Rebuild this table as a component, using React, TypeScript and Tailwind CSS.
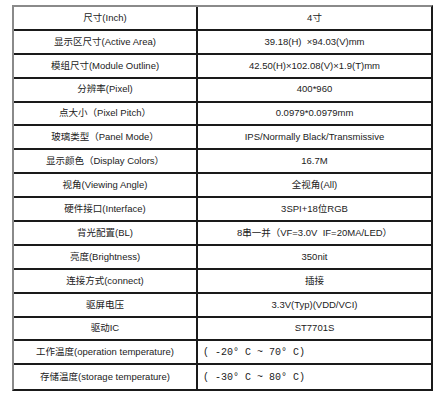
const rows: { label: string; value: string; mono?: boolean }[] = [
  { label: "尺寸(Inch)", value: "4寸" },
  { label: "显示区尺寸(Active Area)", value: "39.18(H)  ×94.03(V)mm" },
  { label: "模组尺寸(Module Outline)", value: "42.50(H)×102.08(V)×1.9(T)mm" },
  { label: "分辨率(Pixel)", value: "400*960" },
  { label: "点大小（Pixel Pitch）", value: "0.0979*0.0979mm" },
  { label: "玻璃类型（Panel Mode）", value: "IPS/Normally Black/Transmissive" },
  { label: "显示颜色（Display Colors）", value: "16.7M" },
  { label: "视角(Viewing Angle)", value: "全视角(All)" },
  { label: "硬件接口(Interface)", value: "3SPI+18位RGB" },
  { label: "背光配置(BL)", value: "8串一并（VF=3.0V  IF=20MA/LED）" },
  { label: "亮度(Brightness)", value: "350nit" },
  { label: "连接方式(connect)", value: "插接" },
  { label: "驱屏电压", value: "3.3V(Typ)(VDD/VCI)" },
  { label: "驱动IC", value: "ST7701S" },
  { label: "工作温度(operation temperature)", value: "( -20° C ~ 70° C)", mono: true },
  { label: "存储温度(storage temperature)", value: "( -30° C ~ 80° C)", mono: true },
];

export default function App() {
  return (
    <div className="min-h-screen w-[447px] h-[400px] bg-white pl-[12px] pt-[5px] text-[#222] font-['Liberation_Sans','Noto_Sans_CJK_SC',sans-serif] text-[9.5px]">
      <div className="w-[421px] border-2 border-[#1a1a1a] border-t-[#8a8a8a] border-l-[#8a8a8a]">
        {rows.map((r, i) => (
          <div
            key={r.label}
            className={
              "flex h-[23.9px] items-center " +
              (i < rows.length - 1 ? "border-b-2 border-[#1a1a1a]" : "")
            }
          >
            <div className="w-[184px] h-full border-r-2 border-[#1a1a1a] flex items-center justify-center whitespace-pre">
              {r.label}
            </div>
            {r.mono ? (
              <div className="flex-1 h-full flex items-center pl-[5px] whitespace-pre font-['Liberation_Mono','Noto_Sans_CJK_SC',monospace] text-[10px]">
                {r.value}
              </div>
            ) : (
              <div className="flex-1 h-full flex items-center justify-center whitespace-pre">
                {r.value}
              </div>
            )}
          </div>
        ))}
      </div>
    </div>
  );
}
